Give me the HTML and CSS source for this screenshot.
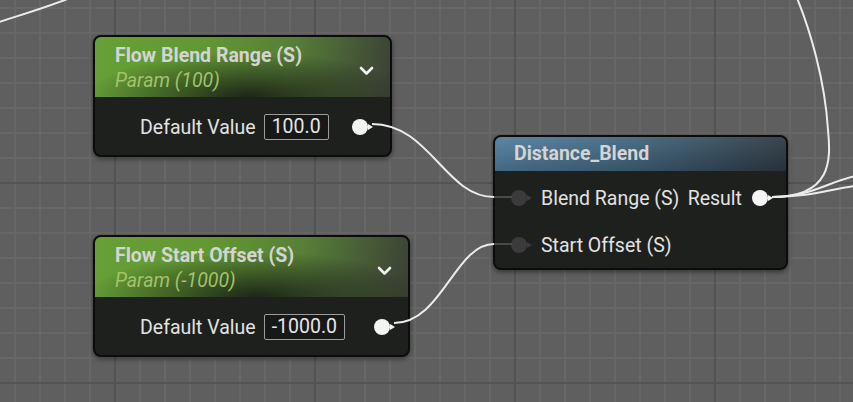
FILE: index.html
```html
<!DOCTYPE html>
<html lang="en">
<head>
    <meta charset="UTF-8">
    <meta name="viewport" content="width=device-width, initial-scale=1.0">
    <title>Material Graph</title>
    <link rel="stylesheet" href="styles.css">
</head>
<body>
    <div class="graph">
        <!-- parameter nodes -->
        <div class="node param" id="blendRange">
            <div class="node-head green">
                <div class="titles">
                    <div class="title">Flow Blend Range (S)</div>
                    <div class="subtitle">Param (100)</div>
                </div>
                <svg class="chevron" width="15" height="10" viewBox="0 0 15 10"><path d="M2 2 L7.5 7.5 L13 2" fill="none" stroke="#f2f2f2" stroke-width="2.6" stroke-linecap="round" stroke-linejoin="round"/></svg>
            </div>
            <div class="node-body">
                <div class="row">
                    <span class="label">Default Value</span>
                    <span class="value">100.0</span>
                    <span class="pin out"></span>
                </div>
            </div>
        </div>

        <div class="node param" id="startOffset">
            <div class="node-head green">
                <div class="titles">
                    <div class="title">Flow Start Offset (S)</div>
                    <div class="subtitle">Param (-1000)</div>
                </div>
                <svg class="chevron" width="15" height="10" viewBox="0 0 15 10"><path d="M2 2 L7.5 7.5 L13 2" fill="none" stroke="#f2f2f2" stroke-width="2.6" stroke-linecap="round" stroke-linejoin="round"/></svg>
            </div>
            <div class="node-body">
                <div class="row">
                    <span class="label">Default Value</span>
                    <span class="value">-1000.0</span>
                    <span class="pin out"></span>
                </div>
            </div>
        </div>

        <!-- function node -->
        <div class="node func" id="distanceBlend">
            <div class="node-head blue">
                <div class="title">Distance_Blend</div>
            </div>
            <div class="node-body">
                <div class="row">
                    <span class="pin in"></span>
                    <span class="label">Blend Range (S)</span>
                    <span class="label right">Result</span>
                    <span class="pin out"></span>
                </div>
                <div class="row">
                    <span class="pin in"></span>
                    <span class="label">Start Offset (S)</span>
                </div>
            </div>
        </div>

        <!-- wires -->
        <svg class="wires" width="853" height="402" viewBox="0 0 853 402">
            <g fill="none" stroke="#ececec" stroke-width="2">
                <path d="M-10 25 C 20 15, 45 8, 70 -2"/>
                <path d="M372 124 C 430 124, 445 197, 494 197"/>
                <path d="M394 323 C 442 323, 455 244, 494 244"/>
                <path d="M772 197 C 832 197, 831 160, 828 130 C 825 80, 810 30, 797 -2"/>
                <path d="M772 197 C 810 197, 828 182, 855 176"/>
                <path d="M772 197 C 812 197, 830 189, 855 186"/>
            </g>
            <g fill="none" stroke="#4a4a4a" stroke-width="2">
                <path d="M494 197 L 512 197"/>
                <path d="M494 244 L 512 244"/>
            </g>
        </svg>
    </div>
</body>
</html>
```

FILE: styles.css
```css
/* base */
body, html {
    margin: 0;
    padding: 0;
    overflow: hidden;
    font-family: Roboto, "Liberation Sans", sans-serif;
}

/* canvas with grid */
.graph {
    position: relative;
    width: 853px;
    height: 402px;
    background-color: #5f5f5f;
    background-image:
        linear-gradient(to right, #535353 2px, transparent 2px),
        linear-gradient(to bottom, #535353 2px, transparent 2px),
        linear-gradient(to right, #676767 2px, transparent 2px),
        linear-gradient(to bottom, #676767 2px, transparent 2px);
    background-size: 200px 200px, 200px 200px, 25px 25px, 25px 25px;
    background-position: 114px -18px, 114px -18px, 14px 7px, 14px 7px;
}

.wires {
    position: absolute;
    left: 0;
    top: 0;
    pointer-events: none;
}

/* nodes */
.node {
    position: absolute;
    box-sizing: border-box;
    background-color: #1e201e;
    border: 2px solid #0c0c0c;
    border-radius: 8px;
    overflow: hidden;
    box-shadow: 0 2px 5px rgba(0, 0, 0, 0.45);
}

#blendRange {
    left: 93px;
    top: 35px;
    width: 299px;
    height: 122px;
}

#startOffset {
    left: 93px;
    top: 235px;
    width: 317px;
    height: 122px;
}

#distanceBlend {
    left: 493px;
    top: 135px;
    width: 295px;
    height: 135px;
}

.node-head {
    display: flex;
    align-items: center;
    box-sizing: border-box;
}

.node-head.green {
    height: 60px;
    padding: 0 16px 0 20px;
    background:
        radial-gradient(ellipse 55% 75% at 52% 100%, rgba(24, 30, 20, 0.92), rgba(24, 30, 20, 0) 100%),
        linear-gradient(100deg, #67a037 0%, #629833 35%, #577f38 65%, #3b4036 100%);
}

.node-head.blue {
    height: 34px;
    padding: 0 0 0 19px;
    background:
        linear-gradient(to bottom, rgba(255, 255, 255, 0.06), rgba(0, 0, 0, 0.18)),
        linear-gradient(to right, #527fa0 0%, #43677f 45%, #2e3b45 100%);
}

.titles {
    flex: 1;
    padding-top: 3px;
}

.title {
    color: #d4d4d4;
    font-size: 19.5px;
    font-weight: bold;
    line-height: 22px;
}

.subtitle {
    margin-top: 3px;
    color: #a3c36c;
    font-size: 19.5px;
    font-style: italic;
    line-height: 22px;
}

.chevron {
    margin-top: 8px;
}

.node-body {
    box-sizing: border-box;
}

.param .node-body {
    padding: 17px 0 0 45px;
}

.func .node-body {
    padding: 14px 18px 0 16px;
}

.row {
    display: flex;
    align-items: center;
    height: 26px;
}

.func .row + .row {
    margin-top: 21px;
}

.label {
    color: #e2e2e2;
    font-size: 19.5px;
}

.label.right {
    margin-left: auto;
}

.value {
    box-sizing: border-box;
    height: 26px;
    margin-left: 8px;
    padding: 0 7px;
    border: 1px solid #9c9c9c;
    border-radius: 2px;
    background-color: #171817;
    color: #e6e6e6;
    font-size: 19.5px;
    line-height: 24px;
}

/* pins */
.pin {
    position: relative;
    flex: none;
    width: 16px;
    height: 16px;
    border-radius: 50%;
    background-color: #f4f4f4;
}

.pin::after {
    content: "";
    position: absolute;
    right: -5px;
    top: 4.5px;
    border-left: 5px solid #f4f4f4;
    border-top: 3.5px solid transparent;
    border-bottom: 3.5px solid transparent;
}

.param .pin {
    margin-left: auto;
}

#blendRange .pin {
    margin-right: 22px;
}

#startOffset .pin {
    margin-right: 18px;
}

.pin.in {
    background-color: #3a3b3a;
    margin-right: 14px;
}

.pin.in::after {
    border-left-color: #3a3b3a;
}

.func .pin.out {
    margin-left: 10px;
}
```
